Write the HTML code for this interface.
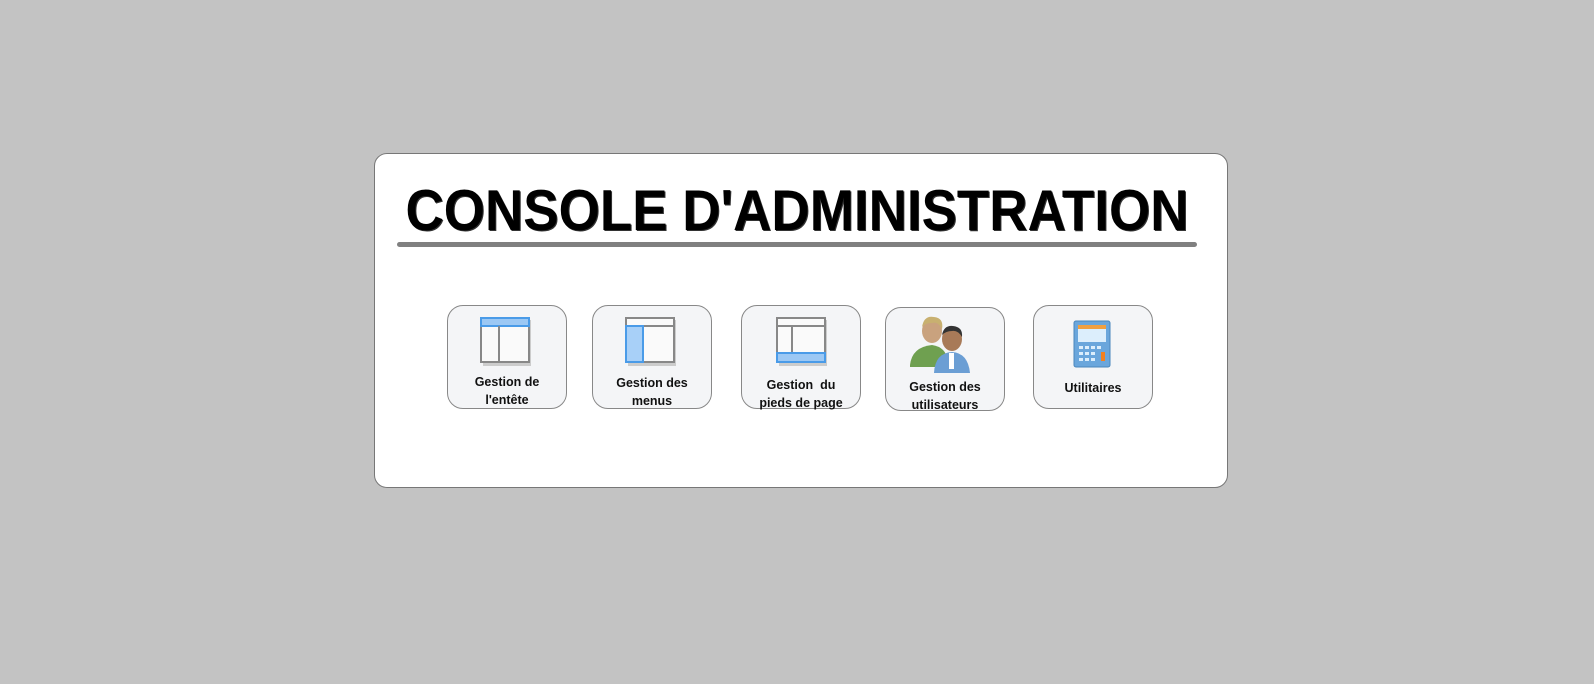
<!DOCTYPE html>
<html><head><style>
body{margin:0;width:1594px;height:684px;background:#c3c3c3;position:relative;overflow:hidden;font-family:"Liberation Sans",sans-serif}
.panel{position:absolute;left:374px;top:153px;width:852px;height:333px;background:#fff;border:1px solid #777;border-radius:13px}
.title{position:absolute;left:0;width:1594px;top:178px;text-align:center;font-weight:bold;font-size:53px;color:#000;transform:scaleY(1.08);transform-origin:center top;text-shadow:1px 1px 0 #333;white-space:nowrap}
.line{position:absolute;left:397px;top:242px;width:800px;height:5px;background:#808080;border-radius:3px}
.btn{position:absolute;width:120px;height:104px;background:#f4f5f7;border:1px solid #888;border-radius:16px;box-sizing:border-box}
.lbl{position:absolute;left:0;width:100%;text-align:center;font-weight:bold;font-size:12.5px;line-height:18px;color:#111}
svg{position:absolute}
</style></head><body>
<div class="panel"></div>
<div class="title">CONSOLE D'ADMINISTRATION</div>
<div class="line"></div>

<div class="btn" style="left:447px;top:305px">
<svg style="left:32px;top:11px" width="52" height="52"><rect x="3" y="3" width="48" height="46" fill="#ccc"/><rect x="1" y="1" width="48" height="44" fill="#fafafa" stroke="#888" stroke-width="2"/><rect x="1" y="1" width="48" height="8" fill="#9cc8f4" stroke="#4a9be8" stroke-width="2"/><line x1="19" y1="9" x2="19" y2="45" stroke="#888" stroke-width="2"/></svg>
<div class="lbl" style="top:67px">Gestion de<br>l'entête</div></div>

<div class="btn" style="left:592px;top:305px">
<svg style="left:32px;top:11px" width="52" height="52"><rect x="3" y="3" width="48" height="46" fill="#ccc"/><rect x="1" y="1" width="48" height="44" fill="#fafafa" stroke="#888" stroke-width="2"/><line x1="1" y1="9" x2="49" y2="9" stroke="#888" stroke-width="2"/><rect x="1" y="9" width="17" height="36" fill="#a8d0f8" stroke="#4a9be8" stroke-width="2"/></svg>
<div class="lbl" style="top:68px">Gestion des<br>menus</div></div>

<div class="btn" style="left:741px;top:305px">
<svg style="left:34px;top:11px" width="52" height="52"><rect x="3" y="3" width="48" height="46" fill="#ccc"/><rect x="1" y="1" width="48" height="44" fill="#fafafa" stroke="#888" stroke-width="2"/><line x1="1" y1="9" x2="49" y2="9" stroke="#888" stroke-width="2"/><line x1="16" y1="9" x2="16" y2="36" stroke="#888" stroke-width="2"/><rect x="1" y="36" width="48" height="9" fill="#9cc8f4" stroke="#4a9be8" stroke-width="2"/></svg>
<div class="lbl" style="top:70px">Gestion &nbsp;du<br>pieds de page</div></div>

<div class="btn" style="left:885px;top:307px">
<svg style="left:24px;top:5px" width="70" height="60"><ellipse cx="22" cy="18" rx="10" ry="12" fill="#c9a27e"/><path d="M12 14 Q14 2 24 4 Q34 5 32 16 Q28 8 22 10 Q15 10 12 14Z" fill="#c8b070"/><path d="M0 52 Q2 34 22 32 Q36 34 38 48 L38 54 L0 54Z" fill="#6fa050"/><ellipse cx="42" cy="26" rx="10" ry="12" fill="#a87a58"/><path d="M32 22 Q34 12 43 13 Q53 14 52 24 Q48 17 42 18 Q36 18 32 22Z" fill="#333"/><path d="M24 60 Q25 40 42 39 Q58 40 60 60Z" fill="#6b9ed4"/><rect x="39" y="40" width="5" height="16" fill="#fff"/></svg>
<div class="lbl" style="top:70px">Gestion des<br>utilisateurs</div></div>

<div class="btn" style="left:1033px;top:305px">
<svg style="left:39px;top:14px" width="40" height="50"><rect x="1" y="1" width="36" height="46" rx="2" fill="#6aa6dc" stroke="#4a86bc"/><rect x="5" y="5" width="28" height="4" fill="#f2a040"/><rect x="5" y="9" width="28" height="13" fill="#dceefc"/><g fill="#dceefc"><rect x="6" y="26" width="4" height="3"/><rect x="12" y="26" width="4" height="3"/><rect x="18" y="26" width="4" height="3"/><rect x="24" y="26" width="4" height="3"/><rect x="6" y="32" width="4" height="3"/><rect x="12" y="32" width="4" height="3"/><rect x="18" y="32" width="4" height="3"/><rect x="6" y="38" width="4" height="3"/><rect x="12" y="38" width="4" height="3"/><rect x="18" y="38" width="4" height="3"/></g><rect x="28" y="32" width="4" height="9" fill="#f28020"/></svg>
<div class="lbl" style="top:73px">Utilitaires</div></div>
</body></html>
